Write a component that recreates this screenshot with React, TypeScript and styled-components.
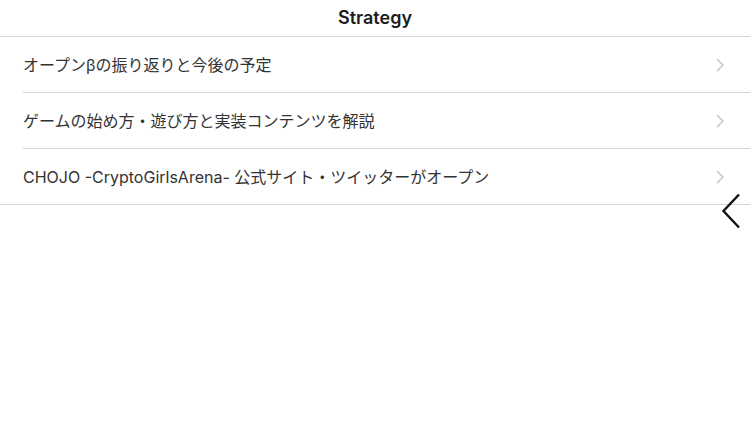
import styled, { createGlobalStyle } from 'styled-components';

const GlobalStyle = createGlobalStyle`
  html, body {
    margin: 0;
    padding: 0;
    background: #fff;
  }
  body {
    font-family: Inter, "Noto Sans CJK JP", sans-serif;
    -webkit-font-smoothing: antialiased;
  }
`;

const articles = [
  'オープンβの振り返りと今後の予定',
  'ゲームの始め方・遊び方と実装コンテンツを解説',
  'CHOJO -CryptoGirlsArena- 公式サイト・ツイッターがオープン',
];

const App = () => {
  return (
    <>
      <GlobalStyle />
      <Page>
        <Header>
          <Title>Strategy</Title>
        </Header>
        <List>
          {articles.map((title, i) => (
            <Row key={title} inset={i !== articles.length - 1}>
              <RowText>{title}</RowText>
              <Chevron viewBox="0 0 8 14" aria-hidden="true">
                <path d="M1 1l6 6-6 6" />
              </Chevron>
            </Row>
          ))}
        </List>
        <BackButton viewBox="0 0 20 36" aria-label="back">
          <path d="M18 1.5L2.5 18 18 34.5" />
        </BackButton>
      </Page>
    </>
  );
};

const Page = styled.div`
  position: relative;
  width: 750px;
  height: 422px;
  background: #fff;
  overflow: hidden;
`;

const Header = styled.header`
  display: flex;
  justify-content: center;
  align-items: center;
  height: 37px;
  border-bottom: 1px solid #d4d4d4;
  box-sizing: border-box;
`;

const Title = styled.h1`
  margin: 0;
  padding-bottom: 2px;
  color: #1c1c1e;
  font-size: 18px;
  font-weight: 600;
`;

const List = styled.ul`
  margin: 0;
  padding: 0;
  list-style: none;
`;

// separators between rows start at the text inset, the last one runs full width
const Row = styled.li<{ inset: boolean }>`
  display: flex;
  align-items: center;
  justify-content: space-between;
  height: 56px;
  padding-left: 23px;
  padding-right: 26px;
  box-sizing: border-box;
  border-bottom: 1px solid #d4d4d4;
  ${({ inset }) =>
    inset &&
    `
    border-bottom: none;
    background: linear-gradient(#d4d4d4, #d4d4d4) 23px 100% / calc(100% - 23px) 1px no-repeat;
  `}
`;

const RowText = styled.span`
  color: #333;
  font-size: 16px;
  padding-bottom: 2px;
`;

const Chevron = styled.svg`
  width: 8px;
  height: 14px;
  fill: none;
  stroke: #c4c4c4;
  stroke-width: 1.5;
`;

const BackButton = styled.svg`
  position: absolute;
  left: 721px;
  top: 193px;
  width: 20px;
  height: 36px;
  fill: none;
  stroke: #111;
  stroke-width: 2.4;
`;

export default App;
